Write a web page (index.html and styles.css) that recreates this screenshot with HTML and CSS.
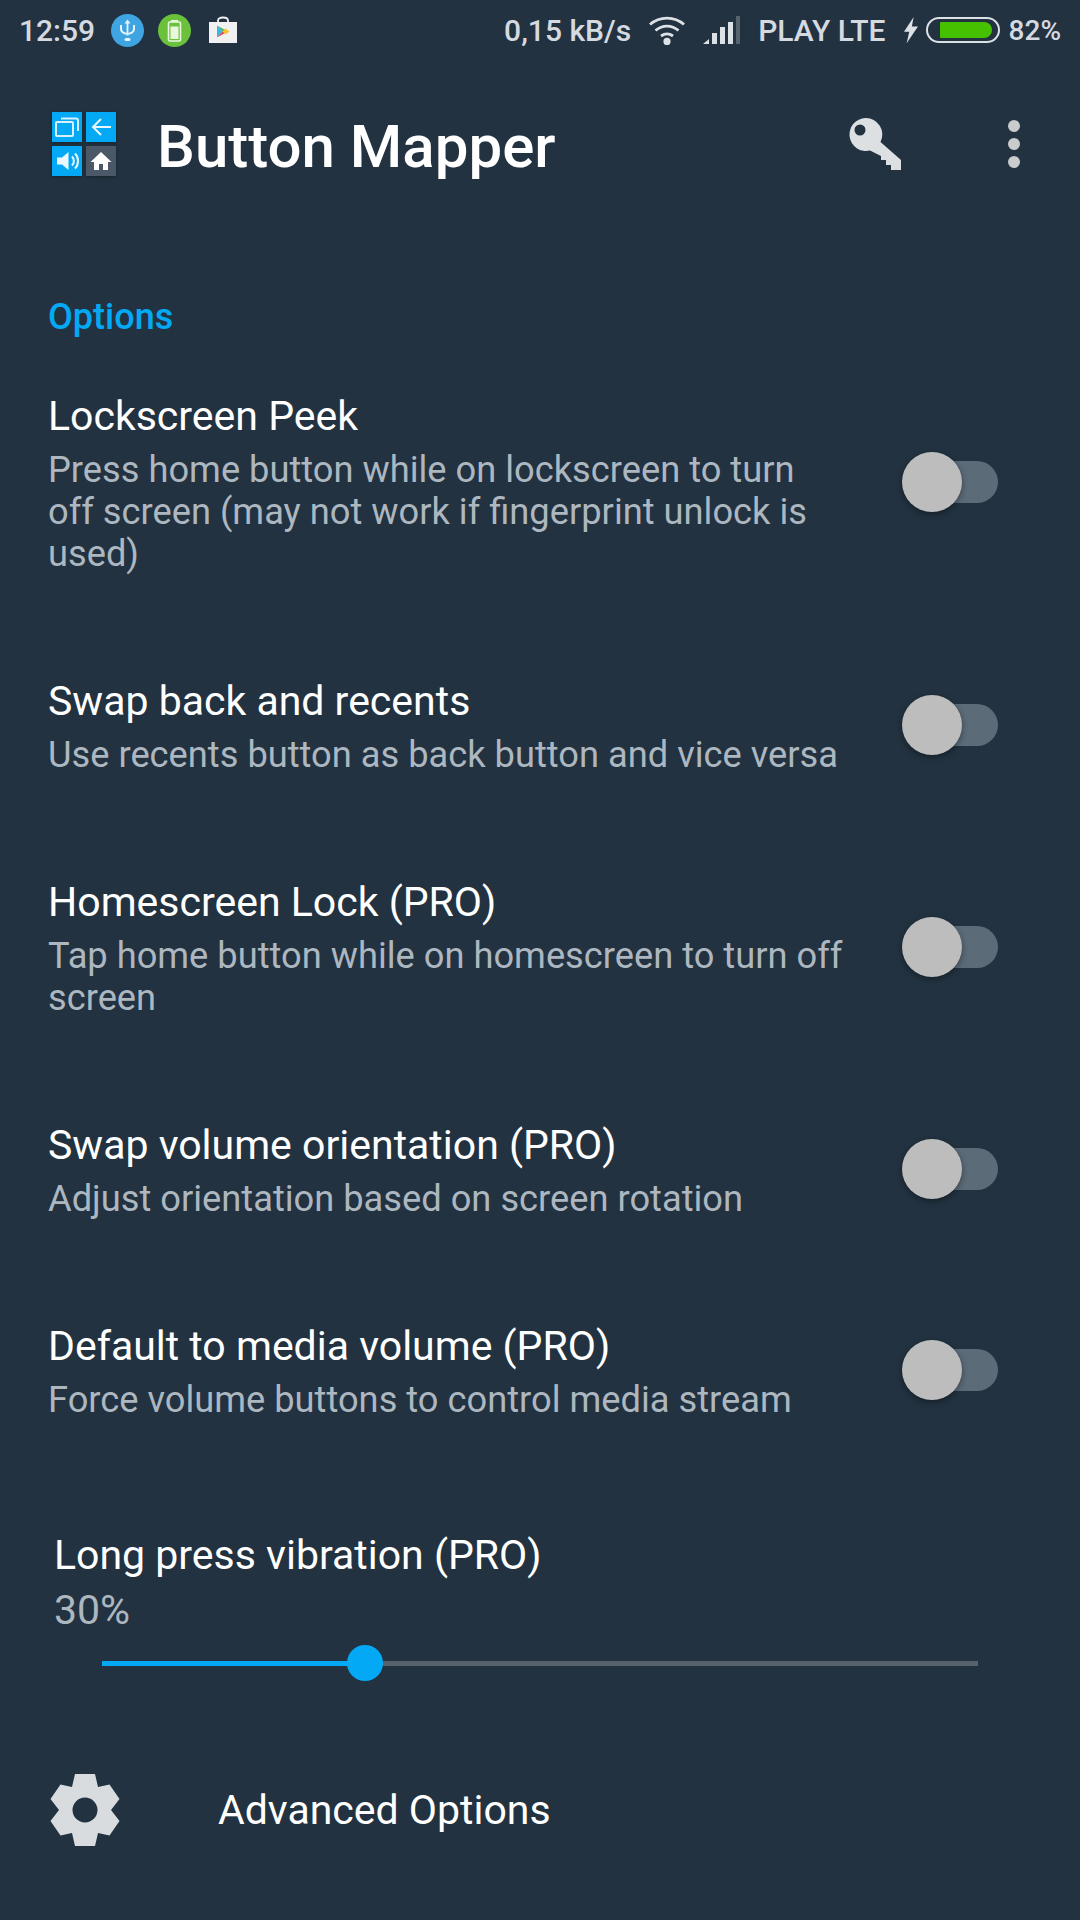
FILE: index.html
```html
<!DOCTYPE html>
<html lang="en">
<head>
  <meta charset="UTF-8">
  <title>Button Mapper</title>
  <link rel="stylesheet" href="styles.css">
</head>
<body>
  <div class="statusbar">
    <div class="status-left">
      <span class="time">12:59</span>
      <svg class="notif first" viewBox="0 0 33 33"><circle cx="16.5" cy="16.5" r="16.5" fill="#3fa5e2"/><path d="M16.5 5.5l3 4h-2.100v12h-1.800v-12h-2.100zM9 11h2v3.500c0 2.500 1.800 3.900 4.500 4.200v2c-3.800-.3-6.500-2.500-6.500-6.200zM24 11h-2v3.500c0 2.500-1.800 3.900-4.500 4.200v2c3.800-.3 6.500-2.500 6.500-6.200z" fill="#e6f3fb"/><rect x="13.5" y="24" width="6" height="3" rx="1.5" fill="#e6f3fb"/></svg>
      <svg class="notif" viewBox="0 0 33 33"><circle cx="16.5" cy="16.5" r="16.5" fill="#6cc13c"/><rect x="10.5" y="8" width="12" height="19" rx="1.5" fill="none" stroke="#e9f7df" stroke-width="1.6"/><rect x="13" y="6" width="7" height="1.8" fill="#e9f7df"/><rect x="12.5" y="12.5" width="8" height="12.5" fill="#e9f7df"/></svg>
      <svg class="bag" viewBox="0 0 28 26"><path d="M0 5h28v21H0z" fill="#f1f1f1"/><path d="M9 5V3.500C9 1.500 11 .5 14 .5s5 1 5 3V5" fill="none" stroke="#f1f1f1" stroke-width="1.8"/><path d="M8 8.500l5.500 6-5.500 6z" fill="#38b6e8"/><path d="M8 8.500l9 5-3.500 1z" fill="#47b565"/><path d="M8 20.500l9-5-3.500-1z" fill="#e5474f"/><path d="M16.500 11.500l4 3-4 3-3-3z" fill="#f7c32e"/></svg>
    </div>
    <div class="status-right">
      <span class="speed">0,15 kB/s</span>
      <svg class="wifi" viewBox="0 0 38 30"><path d="M19 30a3.600 3.600 0 1 1 0-7.200 3.600 3.600 0 0 1 0 7.200z" fill="#dce1e6"/><path d="M2 9.500C11.500 1 26.500 1 36 9.500M7.500 15.500c7-5.800 16-5.800 23 0M13 21c3.600-2.600 8.400-2.600 12 0" fill="none" stroke="#dce1e6" stroke-width="2.800"/></svg>
      <svg class="signal" viewBox="0 0 37 28"><path d="M0 28l6-5v5z" fill="#dce1e6"/><rect x="9" y="17" width="5" height="11" fill="#dce1e6"/><rect x="17" y="11" width="5" height="17" fill="#dce1e6"/><rect x="25" y="6" width="5" height="22" fill="#dce1e6"/><rect x="33" y="0" width="4" height="28" fill="#56636f"/></svg>
      <span class="carrier">PLAY LTE</span>
      <svg class="bolt" viewBox="0 0 16 30"><path d="M11 0L0 17h6l-3 13L16 11H9z" fill="#dce1e6"/></svg>
      <div class="battery"><div class="battery-fill"></div></div>
      <span class="percent">82%</span>
    </div>
  </div>

  <div class="toolbar">
    <div class="logo">
      <div class="tile"><svg viewBox="0 0 30 30"><rect x="4" y="10" width="17" height="14" rx="1" fill="none" stroke="#d8f0fd" stroke-width="2"/><path d="M9 6.500h15a2 2 0 0 1 2 2V19" fill="none" stroke="#d8f0fd" stroke-width="2"/></svg></div>
      <div class="tile"><svg viewBox="0 0 30 30"><path d="M25 15H8M15 7l-8 8 8 8" fill="none" stroke="#e8f6fe" stroke-width="2"/></svg></div>
      <div class="tile"><svg viewBox="0 0 30 30"><path d="M5 11.500h5l6.500-5.500v18L10 18.500H5z" fill="#eaf7ff"/><path d="M20 10.500c2.500 2.500 2.500 6.500 0 9M23 7.500c4 4 4 11 0 15" fill="none" stroke="#eaf7ff" stroke-width="2"/></svg></div>
      <div class="tile tile-home"><svg viewBox="0 0 30 30"><path d="M15 6L4.500 16H8v8h5v-6h4v6h5v-8h3.500z" fill="#fff"/></svg></div>
    </div>
    <h1 class="app-title">Button Mapper</h1>
    <svg class="key" viewBox="0 0 52 52"><path fill-rule="evenodd" d="M16.500 0a16.500 16.500 0 0 1 15 24L52 42v10H42v-5h-5v-5h-5v-4L21 32.500A16.500 16.500 0 1 1 16.500 0zm-5.500 6.500a5.500 5.500 0 1 0 0 11 5.500 5.500 0 0 0 0-11z" fill="#dce0e3"/></svg>
    <div class="dots"><span></span><span></span><span></span></div>
  </div>

  <div class="section-label">Options</div>

  <div class="option">
    <div class="option-text">
      <div class="option-title">Lockscreen Peek</div>
      <div class="option-desc">Press home button while on lockscreen to turn off screen (may not work if fingerprint unlock is used)</div>
    </div>
    <div class="switch"><div class="knob"></div></div>
  </div>
  <div class="option">
    <div class="option-text">
      <div class="option-title">Swap back and recents</div>
      <div class="option-desc">Use recents button as back button and vice versa</div>
    </div>
    <div class="switch"><div class="knob"></div></div>
  </div>
  <div class="option">
    <div class="option-text">
      <div class="option-title">Homescreen Lock (PRO)</div>
      <div class="option-desc">Tap home button while on homescreen to turn off screen</div>
    </div>
    <div class="switch"><div class="knob"></div></div>
  </div>
  <div class="option">
    <div class="option-text">
      <div class="option-title">Swap volume orientation (PRO)</div>
      <div class="option-desc">Adjust orientation based on screen rotation</div>
    </div>
    <div class="switch"><div class="knob"></div></div>
  </div>
  <div class="option">
    <div class="option-text">
      <div class="option-title">Default to media volume (PRO)</div>
      <div class="option-desc">Force volume buttons to control media stream</div>
    </div>
    <div class="switch"><div class="knob"></div></div>
  </div>

  <div class="vibration">
    <div class="option-title">Long press vibration (PRO)</div>
    <div class="vibration-value">30%</div>
    <div class="slider">
      <div class="slider-fill" style="width:30%"></div>
      <div class="slider-thumb" style="left:30%"></div>
    </div>
  </div>

  <div class="advanced">
    <svg class="gear" viewBox="-44 -44 88 88"><path fill-rule="evenodd" d="M-10-36H10L13-23 24.500-25.500 34.500-11 26 0 34.500 11 24.500 25.500 13 23 10 36H-10L-13 23-24.500 25.500-34.500 11-26 0-34.500-11-24.500-25.500-13-23zM0-12.500a12.500 12.500 0 1 0 0 25 12.500 12.500 0 0 0 0-25z" fill="#d8dcdf"/></svg>
    <span class="advanced-label">Advanced Options</span>
  </div>
</body>
</html>
```

FILE: styles.css
```css
html, body {
  margin: 0;
  height: 1920px;
  overflow: hidden;
}
body {
  background-color: #223240;
  font-family: Roboto, "Noto Sans", sans-serif;
  color: #fff;
}

/* status bar */
.statusbar {
  height: 60px;
  padding: 0 19px;
  display: flex;
  justify-content: space-between;
  align-items: center;
  font-size: 30px;
  font-weight: 500;
  color: #d5dae0;
}
.status-left, .status-right {
  display: flex;
  align-items: center;
}
.notif {
  width: 33px;
  height: 33px;
  margin-left: 14px;
}
.notif.first {
  margin-left: 16px;
}
.bag {
  width: 28px;
  height: 26px;
  margin-left: 18px;
  overflow: visible;
}
.wifi {
  width: 38px;
  height: 30px;
  margin-left: 17px;
}
.signal {
  width: 37px;
  height: 28px;
  margin-left: 17px;
}
.carrier {
  margin-left: 18px;
}
.bolt {
  width: 14px;
  height: 30px;
  margin-left: 18px;
}
.battery {
  width: 74px;
  height: 26px;
  margin-left: 8px;
  padding: 3px;
  box-sizing: border-box;
  border: 2px solid #dce1e6;
  border-radius: 13px;
}
.battery-fill {
  width: 52px;
  margin-left: 9px;
  height: 100%;
  background-color: #46c100;
  border-radius: 1px 8px 8px 1px;
}
.percent {
  margin-left: 9px;
  font-size: 28px;
}

/* toolbar */
.toolbar {
  height: 116px;
  margin-top: 26px;
  padding: 0 60px 0 52px;
  display: flex;
  align-items: center;
}
.logo {
  width: 64px;
  display: grid;
  grid-template-columns: 30px 30px;
  gap: 4px;
}
.tile {
  height: 30px;
  background-color: #03a9f4;
  box-shadow: 0 1px 3px rgba(0,0,0,0.3);
}
.tile-home {
  background-color: #4a5867;
}
.tile svg {
  display: block;
}
.app-title {
  margin: 4px 0 0 41px;
  flex: 1;
  font-size: 60px;
  font-weight: 500;
}
.key {
  width: 52px;
  height: 52px;
  margin-right: 107px;
}
.dots {
  display: flex;
  flex-direction: column;
  gap: 6px;
}
.dots span {
  width: 12px;
  height: 12px;
  border-radius: 50%;
  background-color: #c9cbcd;
}

.section-label {
  margin: 94px 0 2px;
  padding-left: 48px;
  font-size: 36px;
  line-height: 42px;
  font-weight: 500;
  color: #03a9f4;
}

/* option rows */
.option {
  padding: 50px 82px 50px 48px;
  display: flex;
  align-items: center;
  justify-content: space-between;
}
.option-text {
  width: 795px;
}
.option-title {
  font-size: 41px;
  line-height: 52px;
}
.option-desc {
  margin-top: 7px;
  font-size: 36.25px;
  line-height: 42px;
  color: #adb7c0;
}
.switch {
  position: relative;
  width: 88px;
  height: 42px;
  margin-bottom: 2px;
  border-radius: 21px;
  background-color: #5c6b78;
}
.knob {
  position: absolute;
  left: -8px;
  top: -9px;
  width: 60px;
  height: 60px;
  border-radius: 50%;
  background-color: #bdbdbd;
  box-shadow: 0 2px 6px rgba(0,0,0,0.4);
}

/* slider */
.vibration {
  padding-left: 54px;
  margin-top: 58px;
}
.vibration-value {
  margin-top: 3px;
  font-size: 41px;
  line-height: 52px;
  color: #adb7c0;
}
.slider {
  position: relative;
  width: 876px;
  height: 5px;
  margin: 25px 0 0 48px;
  background-color: #56636f;
}
.slider-fill {
  height: 100%;
  background-color: #03a9f4;
}
.slider-thumb {
  position: absolute;
  top: -16px;
  width: 36px;
  height: 36px;
  margin-left: -18px;
  border-radius: 50%;
  background-color: #03a9f4;
}

/* bottom row */
.advanced {
  margin-top: 100px;
  padding-left: 41px;
  display: flex;
  align-items: center;
}
.gear {
  width: 88px;
  height: 88px;
}
.advanced-label {
  margin-left: 89px;
  font-size: 41px;
}
```
